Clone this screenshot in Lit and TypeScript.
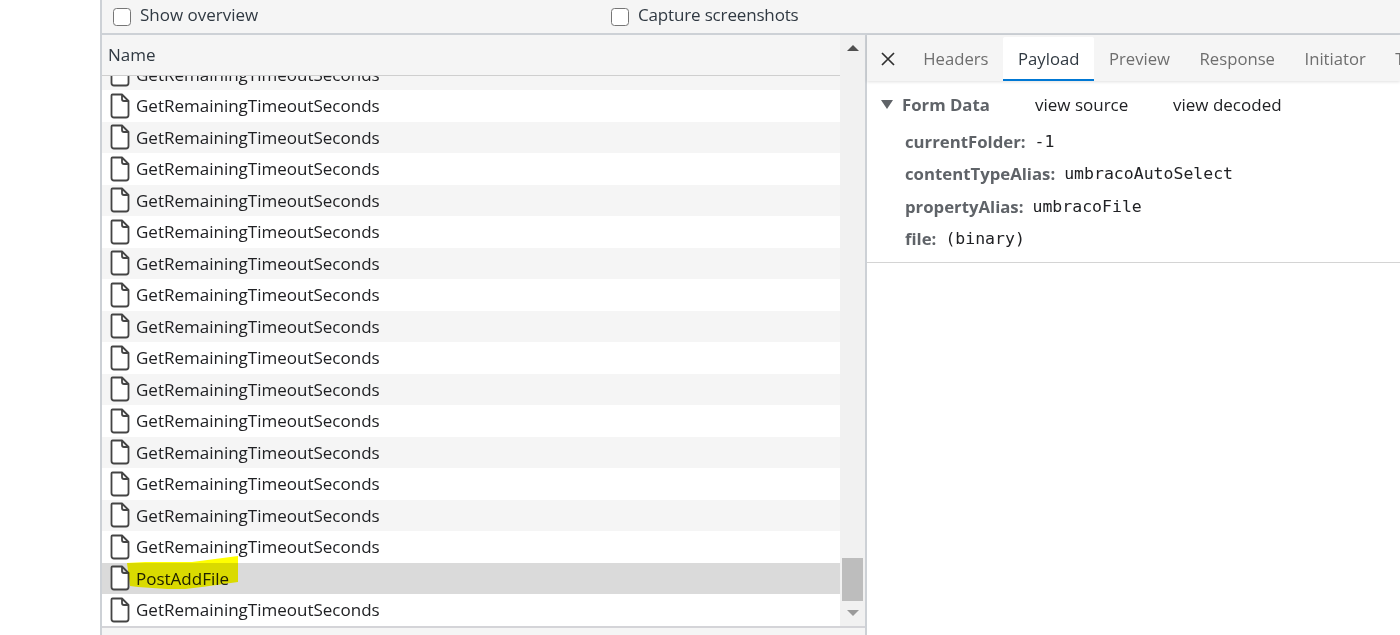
import { LitElement, html, css, svg } from "lit";
import { customElement } from "lit/decorators.js";

const fileIcon = html`<svg class="ficon" viewBox="0 0 20 26" width="20" height="26">
  <path d="M2.5 1.5 H12 L18.5 8 V22 Q18.5 24.5 16 24.5 H4 Q1.5 24.5 1.5 22 V2.5 Q1.5 1.5 2.5 1.5 Z M12 1.5 V6 Q12 8 14 8 H18.5" fill="#fff" stroke="#444" stroke-width="1.8" stroke-linejoin="round"/>
</svg>`;

@customElement("app-root")
export class AppRoot extends LitElement {
  static styles = css`
    :host { display: flex; width: 1400px; height: 635px; overflow: hidden; background: #fff; font-family: "Open Sans", "Noto Sans", sans-serif; font-size: 17px; color: #202124; position: relative; }
    .gutter { width: 100px; flex: none; border-right: 2px solid #cdd1d6; }
    .main { flex: 1; display: flex; flex-direction: column; min-width: 0; }
    .toolbar { height: 33px; flex: none; background: #f5f5f5; border-bottom: 2px solid #cdd1d6; display: flex; align-items: center; color: #303942; }
    .opt { display: flex; align-items: center; gap: 9px; margin-left: 11px; width: 487px; }
    .opt span { position: relative; top: -2px; }
    .opt.tight span { letter-spacing: -0.16px; }
    .opt input { appearance: none; margin: 0; width: 18px; height: 18px; box-sizing: border-box; border: 1.5px solid #767676; border-radius: 3.5px; background: #fff; }
    .split { flex: 1; display: flex; min-height: 0; }
    .left { width: 763px; flex: none; display: flex; flex-direction: column; border-right: 2px solid #cdd1d6; }
    .lbody { flex: 1; display: flex; min-height: 0; }
    .lcol { flex: 1; display: flex; flex-direction: column; min-width: 0; }
    .head { height: 41px; flex: none; background: #f5f5f5; border-bottom: 1px solid #cfcfcf; box-sizing: border-box; display: flex; align-items: center; padding-left: 6px; padding-bottom: 2px; color: #303942; }
    .list { flex: 1; overflow: hidden; min-height: 0; }
    .rows { margin-top: -17.5px; }
    .row { height: 31.5px; display: flex; align-items: center; padding-left: 8px; gap: 6px; background: #fff; }
    .row:nth-child(odd) { background: #f5f5f5; }
    .row.sel { background: #dadada; }
    .ficon { flex: none; }
    .sb { width: 25px; flex: none; background: #f1f1f1; display: flex; flex-direction: column; align-items: center; }
    .up { margin-top: 10px; width: 0; height: 0; border: 6px solid transparent; border-top: 0; border-bottom: 6px solid #505050; }
    .thumb { margin-top: auto; margin-bottom: 9px; width: 21px; height: 43px; background: #bdbdbd; }
    .down { margin-bottom: 10px; width: 0; height: 0; border: 6px solid transparent; border-bottom: 0; border-top: 6px solid #9a9a9a; }
    .foot { height: 9px; flex: none; border-top: 2px solid #d4d4d8; background: #f5f5f5; box-sizing: border-box; }
    .right { flex: 1; min-width: 0; display: flex; flex-direction: column; }
    .tabs { height: 46px; flex: none; background: #f5f5f5; box-shadow: 0 1px 3px rgba(0,0,0,.12); display: flex; align-items: stretch; overflow: hidden; color: #6e6e6e; font-size: 16.7px; box-sizing: border-box; }
    .close { width: 41.5px; flex: none; display: flex; align-items: center; justify-content: center; padding-top: 2px; }
    .tab { padding: 0 14.75px 2px; display: flex; align-items: center; margin-top: 2px; }
    .tab.on { background: #fff; color: #303942; border-bottom: 2px solid #0078d4; border-radius: 2px 2px 0 0; padding-bottom: 0; }
    .section { border-bottom: 1px solid #d4d4d4; padding: 7px 0 7px; }
    .sech { height: 32px; margin-bottom: 5.3px; display: flex; align-items: center; padding-left: 14px; }
    .tri { width: 0; height: 0; border: 6px solid transparent; border-bottom: 0; border-top: 9px solid #5f6368; margin-right: 9px; margin-top: 1px; }
    .sech b { color: #5f6368; width: 133px; font-weight: 700; font-size: 16.75px; }
    .sech span { width: 138px; }
    .kv { height: 32.4px; display: flex; align-items: center; padding-left: 38px; gap: 9px; }
    .kv b { color: #5f6368; font-weight: 700; font-size: 16.75px; }
    .kv code { font-family: "DejaVu Sans Mono", monospace; font-size: 16.5px; color: #202124; }
    .mark { position: absolute; left: 0; top: 0; mix-blend-mode: multiply; pointer-events: none; }
  `;

  render() {
    const names = Array.from({ length: 18 }, (_, i) => (i === 16 ? "PostAddFile" : "GetRemainingTimeoutSeconds"));
    return html`
      <div class="gutter"></div>
      <div class="main">
        <div class="toolbar">
          <label class="opt"><input type="checkbox" /><span>Show overview</span></label>
          <label class="opt tight"><input type="checkbox" /><span>Capture screenshots</span></label>
        </div>
        <div class="split">
          <div class="left">
            <div class="lbody">
              <div class="lcol">
                <div class="head">Name</div>
                <div class="list"><div class="rows">
                  ${names.map((n, i) => html`<div class="row ${i === 16 ? "sel" : ""}">${fileIcon}<span>${n}</span></div>`)}
                </div></div>
              </div>
              <div class="sb"><div class="up"></div><div class="thumb"></div><div class="down"></div></div>
            </div>
            <div class="foot"></div>
          </div>
          <div class="right">
            <div class="tabs">
              <div class="close"><svg width="14" height="14" viewBox="0 0 14 14"><path d="M1 1 L13 13 M13 1 L1 13" stroke="#303030" stroke-width="1.7" fill="none"/></svg></div>
              ${["Headers", "Payload", "Preview", "Response", "Initiator", "Timing"].map(
                (t) => html`<div class="tab ${t === "Payload" ? "on" : ""}">${t}</div>`
              )}
            </div>
            <div class="section">
              <div class="sech"><div class="tri"></div><b>Form Data</b><span>view source</span><span>view decoded</span></div>
              <div class="kv"><b>currentFolder:</b><code>-1</code></div>
              <div class="kv"><b>contentTypeAlias:</b><code>umbracoAutoSelect</code></div>
              <div class="kv"><b>propertyAlias:</b><code>umbracoFile</code></div>
              <div class="kv"><b>file:</b><code>(binary)</code></div>
            </div>
          </div>
        </div>
      </div>
      <svg class="mark" width="1400" height="635" viewBox="0 0 1400 635">
        ${svg`<path d="M127 563 L145 562 L192 562 L238 556 L238 582 L202 587 L185 589 L167 589 L138 587 L130 586 Z" fill="#ffff00"/>`}
      </svg>
    `;
  }
}
